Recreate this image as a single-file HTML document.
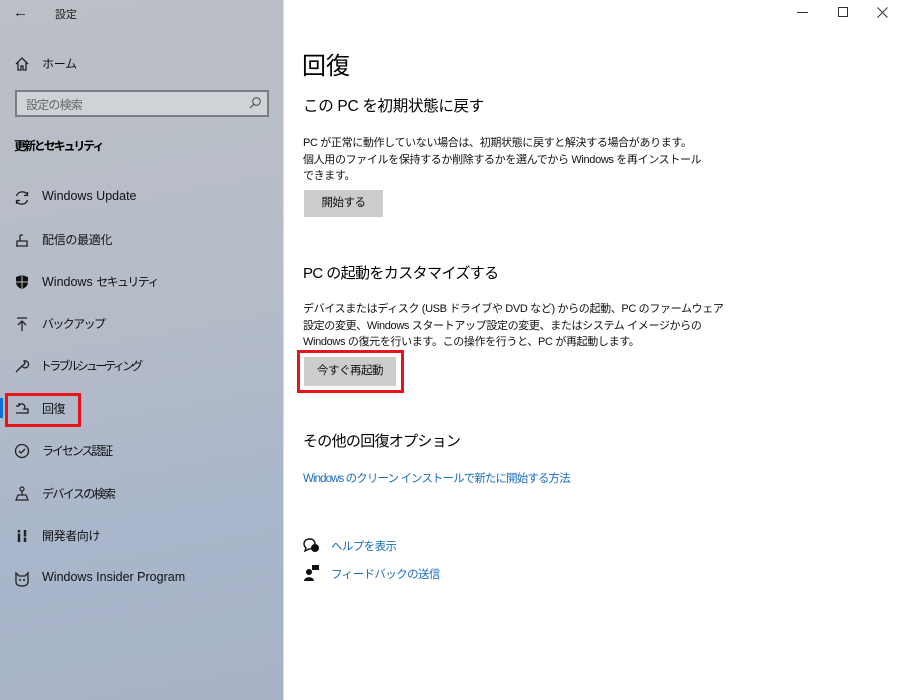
<!DOCTYPE html><html><head><meta charset="utf-8"><style>
*{margin:0;padding:0;box-sizing:border-box}
body{width:900px;height:700px;position:relative;overflow:hidden;background:#fff;font-family:"Liberation Sans","Noto Sans CJK JP",sans-serif;color:#000}
.side{position:absolute;left:0;top:0;width:283px;height:700px;background:linear-gradient(170deg,#bcbfc5 0%,#b5bcc8 45%,#a9b6cb 75%,#a8b2c5 100%)}
.a{position:absolute;white-space:nowrap}
.it{position:absolute;left:42px;font-size:12.5px;color:#111}
.j{font-size:12px;letter-spacing:-1.6px}
.ic{position:absolute;left:13px;width:18px;height:18px}
.p{font-size:11px;line-height:16.5px;color:#111;letter-spacing:-0.35px}
.h{font-size:15.5px;letter-spacing:-0.3px}
.btn{position:absolute;background:#ccc;font-size:11.5px;text-align:center;color:#111;letter-spacing:-0.5px}
.link{color:#1b6fc0;font-size:11.5px;letter-spacing:-0.9px}
</style></head><body>
<div class="side">
<div class="a" style="left:13px;top:4px;font-size:15px;color:#222">←</div>
<div class="a" style="left:55px;top:6px;font-size:11px;color:#222">設定</div>
<svg class="ic" style="top:55px" viewBox="0 0 18 18"><path d="M3 9 L9 3 L15 9 M5 7.5 V15 H8 V11 H10 V15 H13 V7.5" fill="none" stroke="#222" stroke-width="1.3"/></svg>
<div class="it j" style="top:55px;letter-spacing:-0.3px">ホーム</div>
<div class="a" style="left:15px;top:90px;width:254px;height:27px;border:2px solid #7a7d82;background:#cfd2d7"></div>
<div class="a" style="left:26px;top:96px;font-size:12px;color:#666;letter-spacing:-0.8px">設定の検索</div>
<svg class="a" style="left:248px;top:96px" width="14" height="14" viewBox="0 0 14 14"><circle cx="8.5" cy="5.5" r="3.8" fill="none" stroke="#555" stroke-width="1.1"/><path d="M6 8 L2 12" stroke="#555" stroke-width="1.2"/></svg>
<div class="a" style="left:14px;top:137px;font-size:12px;font-weight:bold;letter-spacing:-2.1px">更新とセキュリティ</div>
<svg class="ic" style="top:189px" viewBox="0 0 18 18"><path d="M3.5 7 A6 6 0 0 1 14.5 6 M14.5 11 A6 6 0 0 1 3.5 12" fill="none" stroke="#222" stroke-width="1.3"/><path d="M14.5 3 V6.5 H11" fill="none" stroke="#222" stroke-width="1.3"/><path d="M3.5 15 V11.5 H7" fill="none" stroke="#222" stroke-width="1.3"/></svg>
<div class="it" style="top:189px">Windows Update</div>
<svg class="ic" style="top:231px" viewBox="0 0 18 18"><path d="M3 15 H15 M4 15 V10 H14 V15 M7 10 V4 M7 4 H10" fill="none" stroke="#222" stroke-width="1.3"/></svg>
<div class="it j" style="top:231px;letter-spacing:-0.3px">配信の最適化</div>
<svg class="ic" style="top:273px" viewBox="0 0 18 18"><path d="M9 2 L15 4 V9 C15 13 12 15 9 16 C6 15 3 13 3 9 V4 Z" fill="#111"/><path d="M9 2 V16 M3 9 H15" stroke="#bbb" stroke-width="1"/></svg>
<div class="it" style="top:273px">Windows <span class="j">セキュリティ</span></div>
<svg class="ic" style="top:315px" viewBox="0 0 18 18"><path d="M4 3 H14 M9 16 V6 M5 10 L9 6 L13 10" fill="none" stroke="#222" stroke-width="1.3"/></svg>
<div class="it j" style="top:315px">バックアップ</div>
<svg class="ic" style="top:357px" viewBox="0 0 18 18"><path d="M3 15 L9 9 M9 9 A3.5 3.5 0 1 0 11 4 L12 6 L11 7.5 Z" fill="none" stroke="#222" stroke-width="1.3"/></svg>
<div class="it j" style="top:357px;left:40px;letter-spacing:-2.8px">トラブルシューティング</div>
<div class="a" style="left:0;top:398px;width:3px;height:20px;background:#0a6fd6"></div>
<svg class="ic" style="top:399px" viewBox="0 0 18 18"><path d="M3 14 H15 V10 H11 A3 3 0 1 0 6 7 M6 7 L6 4 M6 7 L3 7" fill="none" stroke="#222" stroke-width="1.3"/></svg>
<div class="it j" style="top:400px;letter-spacing:-0.5px">回復</div>
<div class="a" style="left:5px;top:393px;width:76px;height:34px;border:3px solid #e8141b"></div>
<svg class="ic" style="top:442px" viewBox="0 0 18 18"><circle cx="9" cy="9" r="6.5" fill="none" stroke="#222" stroke-width="1.3"/><path d="M6 9 L8 11 L12 7" fill="none" stroke="#222" stroke-width="1.3"/></svg>
<div class="it j" style="top:442px;letter-spacing:-2.1px">ライセンス認証</div>
<svg class="ic" style="top:485px" viewBox="0 0 18 18"><circle cx="9" cy="4" r="2" fill="none" stroke="#222" stroke-width="1.2"/><path d="M9 6 V10 M5 10 H13 L15 15 H3 Z" fill="none" stroke="#222" stroke-width="1.2"/></svg>
<div class="it j" style="top:485px">デバイスの検索</div>
<svg class="ic" style="top:527px" viewBox="0 0 18 18"><path d="M6 3 V15 M12 3 V15" stroke="#222" stroke-width="2.5"/><path d="M4.5 6 H7.5 M10.5 10 H13.5" stroke="#bbb" stroke-width="1"/></svg>
<div class="it j" style="top:527px;letter-spacing:-0.4px">開発者向け</div>
<svg class="ic" style="top:570px" viewBox="0 0 18 18"><path d="M3 3 L6 6 H12 L15 3 V12 C15 15 12 16 9 16 C6 16 3 15 3 12 Z" fill="none" stroke="#222" stroke-width="1.3"/><circle cx="7" cy="10" r="1" fill="#222"/><circle cx="11" cy="10" r="1" fill="#222"/></svg>
<div class="it" style="top:570px">Windows Insider Program</div>
</div>
<div class="a" style="left:283px;top:0;width:1px;height:700px;background:#ddd"></div>
<div class="a" style="left:797px;width:11px;height:1px;top:12px;background:#333"></div>
<div class="a" style="left:838px;top:7px;width:10px;height:10px;border:1px solid #333"></div>
<svg class="a" style="left:877px;top:7px" width="11" height="11" viewBox="0 0 11 11"><path d="M0.5 0.5 L10.5 10.5 M10.5 0.5 L0.5 10.5" stroke="#333" stroke-width="1"/></svg>
<div class="a" style="left:302px;top:46px;font-size:24px">回復</div>
<div class="a h" style="left:303px;top:94px">この PC を初期状態に戻す</div>
<div class="a p" style="left:303px;top:135px">PC が正常に動作していない場合は、初期状態に戻すと解決する場合があります。<br>個人用のファイルを保持するか削除するかを選んでから Windows を再インストール<br>できます。</div>
<div class="btn" style="left:304px;top:190px;width:79px;height:27px;line-height:27px">開始する</div>
<div class="a h" style="left:303px;top:262px;font-size:15px;letter-spacing:-0.6px">PC の起動をカスタマイズする</div>
<div class="a p" style="left:303px;top:301px">デバイスまたはディスク (USB ドライブや DVD など) からの起動、PC のファームウェア<br>設定の変更、Windows スタートアップ設定の変更、またはシステム イメージからの<br>Windows の復元を行います。この操作を行うと、PC が再起動します。</div>
<div class="btn" style="left:304px;top:357px;width:92px;height:29px;line-height:29px">今すぐ再起動</div>
<div class="a" style="left:297px;top:350px;width:107px;height:43px;border:3px solid #e8141b"></div>
<div class="a h" style="left:303px;top:430px;font-size:15px;letter-spacing:-0.7px">その他の回復オプション</div>
<div class="a link" style="left:303px;top:470px">Windows のクリーン インストールで新たに開始する方法</div>
<svg class="a" style="left:303px;top:538px" width="17" height="16" viewBox="0 0 17 16"><path d="M7 1 C3 1 1 3 1 6 C1 8 2 9 3 10 L2 13 L6 11 C9 11 12 9 12 6 C12 3 10 1 7 1Z" fill="none" stroke="#111" stroke-width="1.4"/><circle cx="12" cy="10" r="4" fill="#111"/></svg>
<div class="a link" style="left:331px;top:538px;letter-spacing:-0.6px">ヘルプを表示</div>
<svg class="a" style="left:304px;top:565px" width="16" height="16" viewBox="0 0 16 16"><rect x="8" y="0" width="7" height="5" fill="#111"/><circle cx="5" cy="7" r="3" fill="#111"/><path d="M0 16 C0 11 10 11 10 16Z" fill="#111"/></svg>
<div class="a link" style="left:331px;top:566px;letter-spacing:-0.6px">フィードバックの送信</div>
</body></html>
